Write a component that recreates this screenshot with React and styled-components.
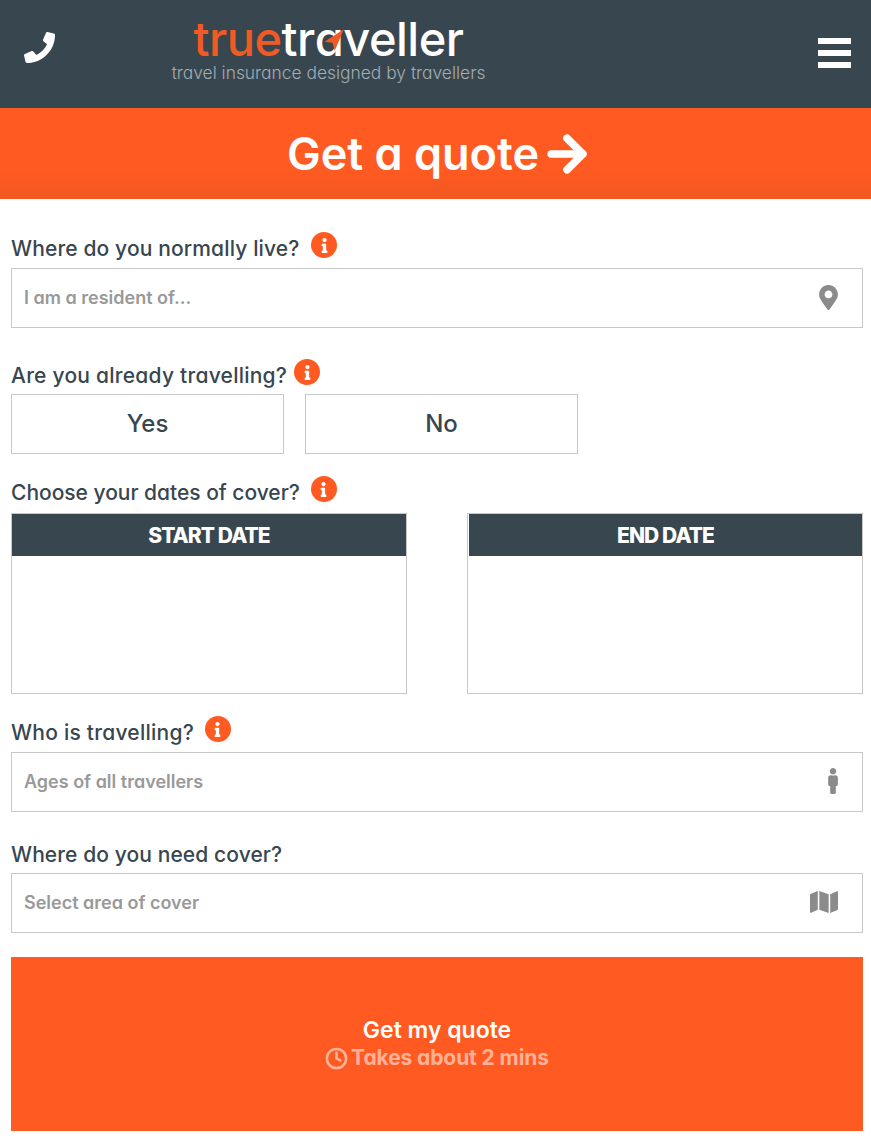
import React from "react";
import styled, { createGlobalStyle } from "styled-components";
import { FaPhone, FaInfo, FaMapMarkerAlt, FaMale, FaMap } from "react-icons/fa";
import { ArrowRight, Clock } from "lucide-react";

const GlobalStyle = createGlobalStyle`
  html, body {
    margin: 0;
    padding: 0;
    background: #fff;
  }
  body {
    font-family: Inter, "Open Sans", sans-serif;
    font-feature-settings: "cv11" 1;
    color: #38464f;
  }
`;

const Header = styled.header`
  height: 108px;
  background: #38464f;
  display: grid;
  grid-template-columns: 147px 1fr 53px;
  padding-left: 24px;
  box-sizing: border-box;
`;

const PhoneButton = styled.div`
  color: #fff;
  font-size: 31px;
  padding-top: 32px;
  line-height: 0;
`;

const Logo = styled.div`
  width: 315px;
  padding-top: 18px;
  text-align: center;
`;

const LogoName = styled.div`
  font-size: 47px;
  line-height: 42px;
  font-weight: 500;
  letter-spacing: -0.5px;
  color: #fff;
  white-space: nowrap;
`;

const LogoTrue = styled.span`
  color: #f15a24;
`;

const LogoA = styled.span`
  position: relative;
  display: inline-block;
`;

const LogoArrow = styled.svg`
  position: absolute;
  left: 6px;
  top: 10px;
  width: 24px;
  height: 24px;
`;

const LogoTag = styled.div`
  margin-top: 4px;
  font-size: 17.4px;
  line-height: 18px;
  font-weight: 300;
  color: #a3adb3;
  white-space: nowrap;
`;

const MenuBars = styled.div`
  display: flex;
  flex-direction: column;
  gap: 6px;
  width: 33px;
  padding-top: 38px;
`;

const MenuBar = styled.span`
  display: block;
  height: 6px;
  background: #fff;
`;

const Banner = styled.div`
  height: 91px;
  padding-left: 10px;
  box-sizing: border-box;
  background: linear-gradient(#ff5a21 0%, #ff5a21 68%, #f15822 100%);
  display: flex;
  align-items: center;
  justify-content: center;
  gap: 1px;
  color: #fff;
  font-size: 45px;
  font-weight: 600;
`;

const Form = styled.main`
  padding: 33px 8px 10px 11px;
`;

const Group = styled.section`
  margin-bottom: ${(p) => p.$after}px;
`;

const Label = styled.div`
  display: flex;
  align-items: center;
  height: 26px;
  margin-bottom: ${(p) => p.$gap}px;
  font-size: 21px;
  font-weight: 500;
  color: #38464f;
`;

const LabelText = styled.span`
  position: relative;
  top: 3px;
  letter-spacing: ${(p) => p.$track}px;
`;

const InfoDot = styled.span`
  width: 26px;
  height: 26px;
  margin-left: ${(p) => p.$left}px;
  border-radius: 50%;
  background: #ff5a21;
  color: #fff;
  display: flex;
  align-items: center;
  justify-content: center;
  font-size: 15px;
`;

const Field = styled.div`
  height: 60px;
  box-sizing: border-box;
  border: 1px solid #c8c8c8;
  display: flex;
  align-items: center;
  justify-content: space-between;
  padding: 0 24px 2px 12px;
  font-size: 18px;
  font-weight: 600;
  color: #999;
`;

const FieldIcon = styled.span`
  display: flex;
  color: #8b8b8b;
  font-size: ${(p) => p.$size}px;
  margin-right: ${(p) => p.$right || 0}px;
`;

const Choices = styled.div`
  display: flex;
  gap: 21px;
`;

const Choice = styled.div`
  width: 273px;
  height: 60px;
  padding-bottom: 2px;
  box-sizing: border-box;
  border: 1px solid #c8c8c8;
  display: flex;
  align-items: center;
  justify-content: center;
  font-size: 24px;
  font-weight: 500;
`;

const Dates = styled.div`
  display: flex;
  justify-content: space-between;
`;

const DateBox = styled.div`
  width: 396px;
  height: 181px;
  box-sizing: border-box;
  border: 1px solid #c8c8c8;
`;

const DateHead = styled.div`
  height: 42px;
  margin-left: ${(p) => p.$inset || 0}px;
  background: #38464f;
  color: #fff;
  font-size: 21px;
  font-weight: 800;
  letter-spacing: -0.9px;
  display: flex;
  align-items: center;
  justify-content: center;
`;

const Submit = styled.div`
  height: 174px;
  background: #ff5a21;
  color: #fff;
  display: flex;
  flex-direction: column;
  align-items: center;
  justify-content: center;
  font-weight: 600;
  font-size: 23px;
  line-height: 28px;
`;

const SubmitNote = styled.div`
  display: flex;
  align-items: center;
  gap: 3px;
  font-size: 21px;
  font-weight: 700;
  letter-spacing: -0.1px;
  color: rgba(255, 255, 255, 0.55);
`;

const App = () => {
  return (
    <>
      <GlobalStyle />
      <Header>
        <PhoneButton>
          <FaPhone />
        </PhoneButton>
        <Logo>
          <LogoName>
            <LogoTrue>true</LogoTrue>tr
            <LogoA>
              a
              <LogoArrow viewBox="0 0 21 21">
                <path d="M20 1 L3 12 L10 13 L12 20 Z" fill="#f15a24" />
              </LogoArrow>
            </LogoA>
            veller
          </LogoName>
          <LogoTag>travel insurance designed by travellers</LogoTag>
        </Logo>
        <MenuBars>
          <MenuBar />
          <MenuBar />
          <MenuBar />
        </MenuBars>
      </Header>

      <Banner>
        Get a quote
        <ArrowRight size={54} strokeWidth={3.4} />
      </Banner>

      <Form>
        <Group $after={31}>
          <Label $gap={10}>
            <LabelText $track={0.13}>Where do you normally live?</LabelText>
            <InfoDot $left={12}>
              <FaInfo />
            </InfoDot>
          </Label>
          <Field>
            I am a resident of...
            <FieldIcon $size={25} $right={-3}>
              <FaMapMarkerAlt />
            </FieldIcon>
          </Field>
        </Group>

        <Group $after={22}>
          <Label $gap={9}>
            <LabelText $track={0.24}>Are you already travelling?</LabelText>
            <InfoDot $left={7}>
              <FaInfo />
            </InfoDot>
          </Label>
          <Choices>
            <Choice>Yes</Choice>
            <Choice>No</Choice>
          </Choices>
        </Group>

        <Group $after={22}>
          <Label $gap={11}>
            <LabelText $track={-0.02}>Choose your dates of cover?</LabelText>
            <InfoDot $left={11}>
              <FaInfo />
            </InfoDot>
          </Label>
          <Dates>
            <DateBox>
              <DateHead>START DATE</DateHead>
            </DateBox>
            <DateBox>
              <DateHead $inset={1}>END DATE</DateHead>
            </DateBox>
          </Dates>
        </Group>

        <Group $after={26}>
          <Label $gap={10}>
            <LabelText $track={0.24}>Who is travelling?</LabelText>
            <InfoDot $left={11}>
              <FaInfo />
            </InfoDot>
          </Label>
          <Field>
            Ages of all travellers
            <FieldIcon $size={26} $right={-8}>
              <FaMale />
            </FieldIcon>
          </Field>
        </Group>

        <Group $after={24}>
          <Label $gap={9}>
            <LabelText $track={0.09}>Where do you need cover?</LabelText>
          </Label>
          <Field>
            Select area of cover
            <FieldIcon $size={28}>
              <FaMap />
            </FieldIcon>
          </Field>
        </Group>

        <Submit>
          Get my quote
          <SubmitNote>
            <Clock size={23} strokeWidth={2.6} />
            Takes about 2 mins
          </SubmitNote>
        </Submit>
      </Form>
    </>
  );
};

export default App;
